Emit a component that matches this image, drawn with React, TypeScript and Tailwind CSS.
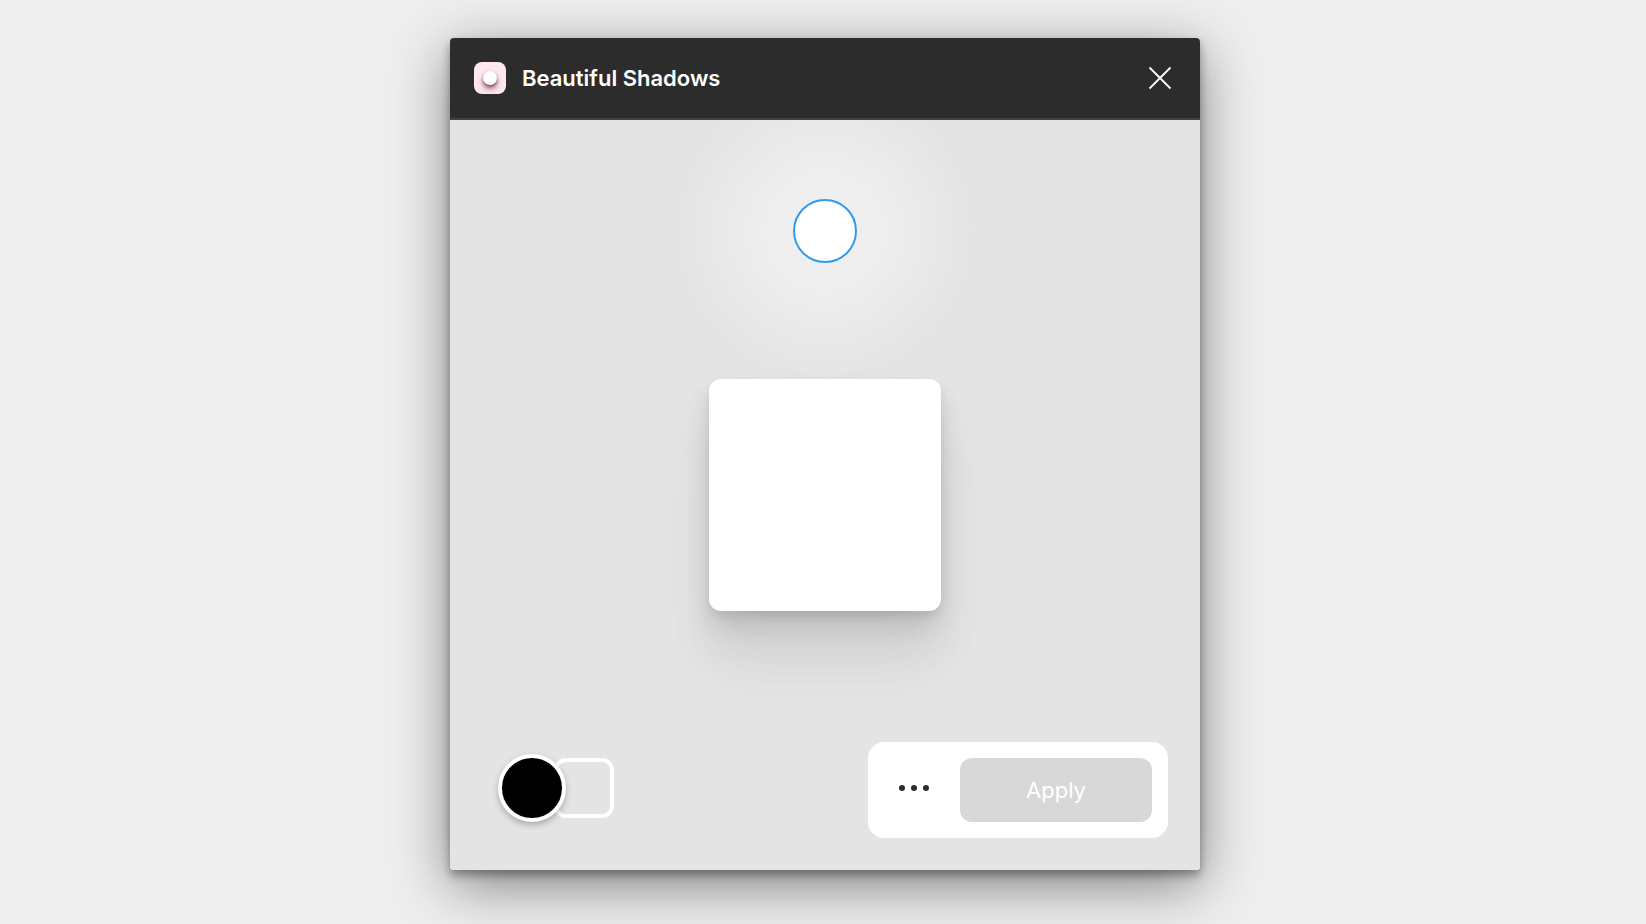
import { clsx } from "clsx";

const SHADOWS = {
  window:
    "shadow-[0_15px_56px_rgba(0,0,0,0.46),0_5px_10px_rgba(0,0,0,0.35)]",
  preview:
    "shadow-[0_5px_8px_rgba(0,0,0,0.08),0_14px_24px_rgba(0,0,0,0.09),0_34px_46px_rgba(0,0,0,0.08),0_64px_60px_rgba(0,0,0,0.03)]",
};

function Logo() {
  return (
    <span className="flex size-8 shrink-0 items-center justify-center rounded-lg bg-[#ffe9ee]">
      <span className="size-[14px] rounded-full bg-white shadow-[0_1px_2px_rgba(80,20,40,0.3),0_3px_4px_rgba(80,20,40,0.6),0_5px_8px_rgba(80,20,40,0.2)]" />
    </span>
  );
}

function Header({ title }: { title: string }) {
  return (
    <header className="flex h-[82px] items-center justify-between border-b-2 border-[#434343] bg-[#2c2c2c] px-6">
      <div className="flex items-center gap-4">
        <Logo />
        <h1 className="text-[22px] leading-8 font-semibold text-white">{title}</h1>
      </div>
      <button type="button" aria-label="Close" className="flex size-8 items-center justify-center text-white">
        <svg viewBox="0 0 24 24" className="size-6" fill="none" stroke="currentColor" strokeWidth="1.8">
          <path d="M1.5 1.5l21 21M22.5 1.5l-21 21" />
        </svg>
      </button>
    </header>
  );
}

function ColorPicker() {
  return (
    <div className="flex items-center">
      <button
        type="button"
        aria-label="Shadow color"
        className="z-10 size-[68px] rounded-full border-4 border-white bg-black shadow-[0_3px_6px_rgba(0,0,0,0.25)]"
      />
      <button
        type="button"
        aria-label="Background color"
        className="-ml-3 size-[60px] rounded-xl border-4 border-white"
      />
    </div>
  );
}

function ActionBar() {
  return (
    <div className="flex items-start gap-4 rounded-2xl bg-white p-4">
      <button
        type="button"
        aria-label="More options"
        className="flex size-[60px] items-center justify-center text-[#2c2c2c]"
      >
        <svg viewBox="0 0 32 8" className="h-2 w-8" fill="currentColor">
          <circle cx="4" cy="4" r="3" />
          <circle cx="16" cy="4" r="3" />
          <circle cx="28" cy="4" r="3" />
        </svg>
      </button>
      <button type="button" className="h-16 w-48 rounded-xl bg-[#d8d8d8] text-[22px] text-white">
        Apply
      </button>
    </div>
  );
}

export default function App() {
  return (
    <div className="flex min-h-screen items-start justify-center bg-[#eee] pt-[38px] pb-8 pl-1 font-['Inter',sans-serif]">
      <section className={clsx("w-full max-w-[750px] overflow-hidden rounded", SHADOWS.window)}>
        <Header title="Beautiful Shadows" />
        <main className="flex flex-col items-center bg-[#e4e4e4] bg-[radial-gradient(circle_at_50%_111px,#efefef_50px,#e4e4e4_150px)] pt-[79px]">
          <button
            type="button"
            aria-label="Light source"
            className="size-16 rounded-full border-2 border-[#2e9bea] bg-white"
          />
          <div className={clsx("mt-[116px] size-[232px] rounded-xl bg-white", SHADOWS.preview)} />
          <footer className="mt-[131px] flex w-full items-end justify-between pr-8 pb-8 pl-12">
            <div className="pb-4">
              <ColorPicker />
            </div>
            <ActionBar />
          </footer>
        </main>
      </section>
    </div>
  );
}
